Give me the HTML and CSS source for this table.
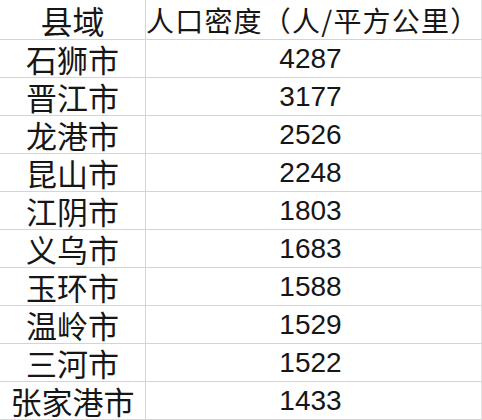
FILE: index.html
```html
<!DOCTYPE html>
<html lang="zh-CN">
<head>
<meta charset="utf-8">
<link rel="stylesheet" href="styles.css">
</head>
<body>
<div class="sheet">
  <div class="cell name head">县域</div>
  <div class="cell val head2">人口密度（人/平方公里）</div>
  <div class="cell name">石狮市</div><div class="cell val">4287</div>
  <div class="cell name">晋江市</div><div class="cell val">3177</div>
  <div class="cell name">龙港市</div><div class="cell val">2526</div>
  <div class="cell name">昆山市</div><div class="cell val">2248</div>
  <div class="cell name">江阴市</div><div class="cell val">1803</div>
  <div class="cell name">义乌市</div><div class="cell val">1683</div>
  <div class="cell name">玉环市</div><div class="cell val">1588</div>
  <div class="cell name">温岭市</div><div class="cell val">1529</div>
  <div class="cell name">三河市</div><div class="cell val">1522</div>
  <div class="cell name">张家港市</div><div class="cell val">1433</div>
</div>
</body>
</html>
```
FILE: styles.css
```css
html, body {
  margin: 0;
  padding: 0;
  background: #ffffff;
}
.sheet {
  width: 482px;
  height: 420px;
  display: grid;
  grid-template-columns: 146px 336px;
  grid-template-rows: 40px repeat(10, 38px);
  color: #161616;
  font-family: "Noto Sans CJK SC", "Noto Sans", sans-serif;
}
.cell {
  box-sizing: border-box;
  border-bottom: 1px solid #d4d4d4;
  display: flex;
  align-items: center;
  white-space: nowrap;
  line-height: 1;
}
.name {
  border-right: 1px solid #d4d4d4;
  justify-content: center;
  font-size: 31px;
}
.head {
  font-size: 32px;
}
.val {
  border-right: 1px solid #e2e2e2;
  justify-content: center;
  font-family: "Liberation Sans", Arial, sans-serif;
  font-size: 28px;
  padding-right: 6px;
}
.head2 {
  font-family: "Noto Sans CJK SC", "Noto Sans", sans-serif;
  font-size: 28px;
  letter-spacing: 1.2px;
  justify-content: flex-start;
  padding-left: 0;
  padding-right: 0;
}
```
